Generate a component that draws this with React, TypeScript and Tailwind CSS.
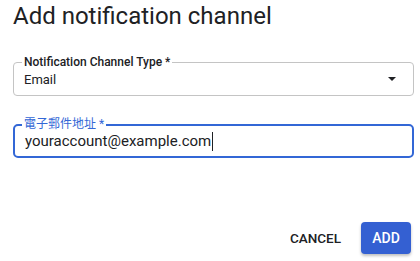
import React from "react";

export default function App() {
  return (
    <div className="w-[420px] h-[261px] bg-white relative overflow-hidden" style={{ fontFamily: "Roboto, 'Noto Sans CJK TC', sans-serif" }}>
      <h1 className="absolute left-[13px] top-[0px] text-[24px] leading-[32px] text-[#202124] font-normal">Add notification channel</h1>
      <div className="px-[13px] pt-[62px] pr-[6px] flex flex-col">
        <div className="relative h-[34px] border border-[#c4c4c4] rounded-[4px] flex items-center px-[10px]">
          <span className="absolute left-[8px] -top-[9px] bg-white px-[2px] text-[12px] leading-[16px] font-medium text-[#202124]">Notification Channel Type *</span>
          <span className="text-[13px] text-[#202124] pt-[1px]">Email</span>
          <svg className="ml-auto mr-[7px]" width="8" height="4" viewBox="0 0 8 4"><path d="M0 0 L8 0 L4 4 Z" fill="#202124" /></svg>
        </div>
        <div className="relative mt-[28px] h-[34px] border-2 border-[#3367d6] rounded-[5px] flex items-center px-[9px]">
          <span className="absolute left-[7px] -top-[10px] bg-white px-[2px] text-[12px] leading-[16px] text-[#3367d6]">電子郵件地址 *</span>
          <span className="text-[15px] text-[#202124] pt-[1px] pl-[1px]">youraccount@example.com</span>
          <span className="w-[1px] h-[19px] bg-[#202124] ml-[1px]" />
        </div>
      </div>
      <div className="absolute right-[9px] top-[222px] flex items-center gap-[20px]">
        <span className="text-[13.5px] font-medium text-[#202124]">CANCEL</span>
        <span className="w-[50px] h-[32px] rounded-[4px] bg-[#3460d2] text-white text-[14px] font-medium flex items-center justify-center shadow-[0_2px_3px_rgba(0,0,0,0.25)]">ADD</span>
      </div>
    </div>
  );
}
